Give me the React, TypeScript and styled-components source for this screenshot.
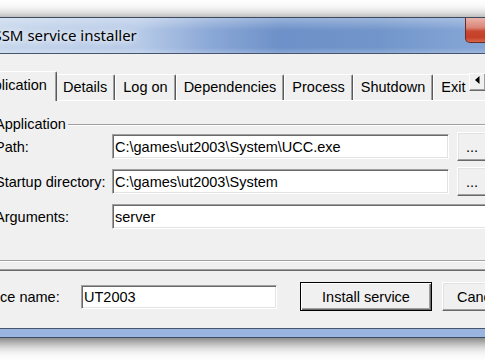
import styled, { createGlobalStyle } from "styled-components";

const GlobalStyle = createGlobalStyle`
  html, body {
    margin: 0;
    padding: 0;
    background: #ffffff;
  }
`;

const Screen = styled.div`
  width: 485px;
  height: 360px;
  overflow: hidden;
  box-sizing: border-box;
  padding-top: 17px;
  background: #ffffff;
  font-family: "Liberation Sans", Arial, sans-serif;
  font-size: 14.5px;
  color: #000;
`;

const Window = styled.div`
  width: 605px;
  margin-left: -60px;
  border: 1px solid #3d4b60;
  background: linear-gradient(180deg, #5b7fbd 0%, #7597cf 50%, #9ab5e0 100%);
  box-shadow: 0 3px 16px rgba(0, 0, 0, 0.7);
`;

const TitleBar = styled.div`
  height: 35px;
  display: flex;
  align-items: flex-start;
  background:
    linear-gradient(180deg, rgba(255, 255, 255, 0.3) 0%, rgba(255, 255, 255, 0) 35%, rgba(255, 255, 255, 0) 85%, rgba(255, 255, 255, 0.2) 100%),
    linear-gradient(90deg, #c6d6ec 59px, #b6cae7 199px, #8ba8d7 269px, #6d91c8 339px, #7296cb 439px, #84a4d5 529px);
`;

const Title = styled.span`
  margin-left: 41px;
  font-family: "Noto Sans", "Open Sans", sans-serif;
  font-size: 15px;
  line-height: 35px;
  color: #000;
  white-space: nowrap;
  text-shadow: 0 0 6px #fff, 0 0 10px rgba(255, 255, 255, 0.9);
`;

const CloseButton = styled.div`
  margin-left: auto;
  margin-right: 11px;
  width: 70px;
  height: 25px;
  box-sizing: border-box;
  border: 1px solid #6a2b24;
  border-top: none;
  border-radius: 0 0 5px 5px;
  background: linear-gradient(180deg, #e9b2aa 0%, #da8576 40%, #c8462f 55%, #c43f28 80%, #d8664c 100%);
`;

const Client = styled.div`
  height: 276px;
  box-sizing: border-box;
  margin: 0 8px;
  border: 1px solid #46556c;
  background: #f0f0f0;
  padding: 17px 18px 0 17px;
`;

const BottomFrame = styled.div`
  height: 8px;
`;

const TabControl = styled.div`
  margin-left: -1px;
`;

const TabStrip = styled.div`
  display: flex;
  align-items: flex-end;
  height: 29px;
  padding: 0 16px 0 2px;
`;

const TabList = styled.div`
  flex: 1;
  min-width: 0;
  display: flex;
  align-items: flex-end;
  height: 29px;
  overflow-x: clip;
  overflow-y: visible;
`;

const Tab = styled.div<{ $active?: boolean }>`
  flex: none;
  box-sizing: border-box;
  display: flex;
  align-items: center;
  height: ${(p) => (p.$active ? 30 : 26)}px;
  padding: 0 ${(p) => (p.$active ? 9 : 7)}px ${(p) => (p.$active ? 4 : 2)}px;
  margin: 0 ${(p) => (p.$active ? "-2px" : "0")} ${(p) => (p.$active ? "-1px" : "0")};
  background: #f0f0f0;
  border: 1px solid #ffffff;
  border-right-color: #5a5a5a;
  border-bottom: none;
  border-radius: 2px 2px 0 0;
  box-shadow: inset -1px 0 0 #a0a0a0;
  white-space: nowrap;
  position: ${(p) => (p.$active ? "relative" : "static")};
  z-index: ${(p) => (p.$active ? 1 : "auto")};
`;

const Spinner = styled.div`
  flex: none;
  align-self: flex-start;
  margin-top: 2px;
  display: flex;
`;

const SpinButton = styled.div`
  width: 17px;
  height: 18px;
  box-sizing: border-box;
  border: 1px solid;
  border-color: #ffffff #696969 #696969 #ffffff;
  box-shadow: inset -1px -1px 0 #a0a0a0;
  background: #f0f0f0;
  display: flex;
  align-items: flex-start;
  justify-content: center;
`;

const TabPage = styled.div`
  border: 1px solid;
  border-color: #ffffff #696969 #696969 #ffffff;
  box-shadow: inset -1px -1px 0 #a0a0a0;
  background: #f0f0f0;
  padding: 15px 6px 9px 20px;
`;

const GroupBox = styled.fieldset`
  margin: 0;
  min-width: 0;
  padding: 0 7px 29px;
  border: 1px solid #a0a0a0;
  box-shadow: 1px 1px 0 #ffffff, inset 1px 1px 0 #ffffff;
`;

const Legend = styled.legend`
  padding: 0 2px;
  margin-left: -2px;
  line-height: 16px;
  background: #f0f0f0;
`;

const FieldGrid = styled.div`
  display: grid;
  grid-template-columns: 109px 337px 30px;
  grid-auto-rows: 29px;
  column-gap: 8px;
  row-gap: 6px;
  align-items: center;
`;

const Label = styled.span`
  white-space: nowrap;
`;

const Edit = styled.input<{ $span?: boolean; $height?: number }>`
  box-sizing: border-box;
  width: 100%;
  height: ${(p) => p.$height ?? 25}px;
  grid-column: ${(p) => (p.$span ? "2 / 4" : "auto")};
  margin: 0;
  padding: 0 2px;
  border: 1px solid;
  border-color: #a0a0a0 #ffffff #ffffff #a0a0a0;
  box-shadow: inset 1px 1px 0 #696969, inset -1px -1px 0 #e3e3e3;
  background: #ffffff;
  font-family: "Liberation Sans", Arial, sans-serif;
  font-size: 14.5px;
  color: #000;
  outline: none;
`;

const Button = styled.button<{ $default?: boolean; $width?: number }>`
  box-sizing: border-box;
  flex: none;
  width: ${(p) => (p.$width ? `${p.$width}px` : "100%")};
  height: 29px;
  margin: 0;
  padding: 0;
  border: 1px solid;
  border-color: ${(p) => (p.$default ? "#000000" : "#ffffff #696969 #696969 #ffffff")};
  box-shadow: ${(p) =>
    p.$default
      ? "inset 1px 1px 0 #ffffff, inset -1px -1px 0 #696969, inset -2px -2px 0 #a0a0a0"
      : "inset -1px -1px 0 #a0a0a0, inset 1px 1px 0 #e3e3e3"};
  background: #f0f0f0;
  font-family: "Liberation Sans", Arial, sans-serif;
  font-size: 14.5px;
  color: #000;
  white-space: nowrap;
`;

const ServiceRow = styled.div`
  display: flex;
  align-items: center;
  height: 29px;
  margin-top: 11px;
`;

const ServiceLabel = styled.span`
  flex: none;
  width: 114px;
  white-space: nowrap;
`;

const Gap = styled.div<{ $w: number }>`
  flex: none;
  width: ${(p) => p.$w}px;
`;

const tabs = ["Application", "Details", "Log on", "Dependencies", "Process", "Shutdown", "Exit actions", "I/O", "File rotation"];

export default function App() {
  return (
    <Screen>
      <GlobalStyle />
      <Window>
        <TitleBar>
          <Title>NSSM service installer</Title>
          <CloseButton />
        </TitleBar>
        <Client>
          <TabControl>
            <TabStrip>
              <TabList>
                {tabs.map((t, i) => (
                  <Tab key={t} $active={i === 0}>
                    {t}
                  </Tab>
                ))}
              </TabList>
              <Spinner>
                <SpinButton>
                  <svg width="15" height="16" viewBox="0 0 15 16">
                    <polygon points="9.5,2 9.5,10 5,6" fill="#000" />
                  </svg>
                </SpinButton>
                <SpinButton>
                  <svg width="15" height="16" viewBox="0 0 15 16">
                    <polygon points="5.5,2 5.5,10 10,6" fill="#000" />
                  </svg>
                </SpinButton>
              </Spinner>
            </TabStrip>
            <TabPage>
              <GroupBox>
                <Legend>Application</Legend>
                <FieldGrid>
                  <Label>Path:</Label>
                  <Edit readOnly defaultValue="C:\games\ut2003\System\UCC.exe" />
                  <Button>...</Button>
                  <Label>Startup directory:</Label>
                  <Edit readOnly defaultValue="C:\games\ut2003\System" />
                  <Button>...</Button>
                  <Label>Arguments:</Label>
                  <Edit readOnly $span defaultValue="server" />
                </FieldGrid>
              </GroupBox>
            </TabPage>
          </TabControl>
          <ServiceRow>
            <ServiceLabel>Service name:</ServiceLabel>
            <Edit readOnly $height={24} style={{ width: 196 }} defaultValue="UT2003" />
            <Gap $w={23} />
            <Button $default $width={132}>Install service</Button>
            <Gap $w={10} />
            <Button $width={75}>Cancel</Button>
          </ServiceRow>
        </Client>
        <BottomFrame />
      </Window>
    </Screen>
  );
}
